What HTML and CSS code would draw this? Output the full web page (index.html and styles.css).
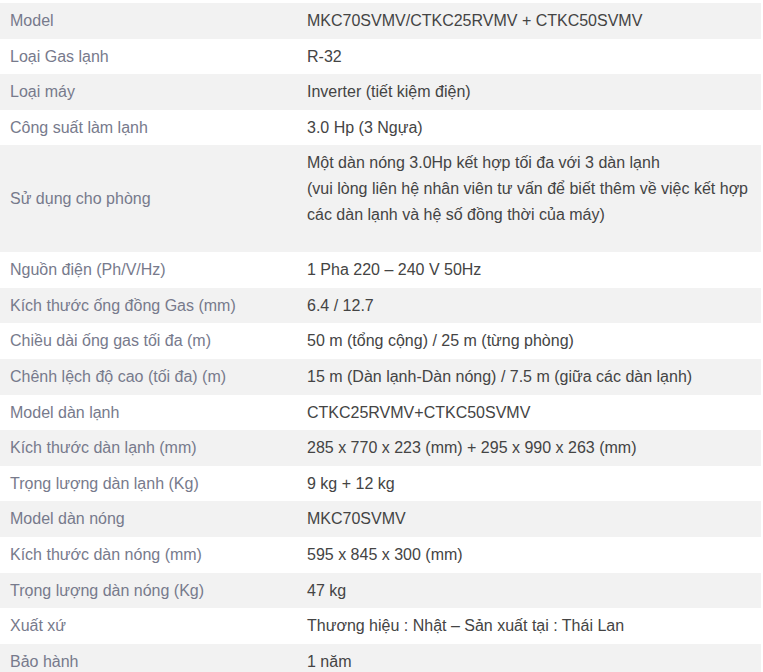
FILE: index.html
```html
<!DOCTYPE html>
<html lang="vi">
<head>
<meta charset="utf-8">
<link rel="stylesheet" href="styles.css">
</head>
<body>
<table class="spec">
<tbody>
<tr><td class="k">Model</td><td class="v">MKC70SVMV/CTKC25RVMV + CTKC50SVMV</td></tr>
<tr><td class="k">Loại Gas lạnh</td><td class="v">R-32</td></tr>
<tr><td class="k">Loại máy</td><td class="v">Inverter (tiết kiệm điện)</td></tr>
<tr><td class="k">Công suất làm lạnh</td><td class="v">3.0 Hp (3 Ngựa)</td></tr>
<tr><td class="k">Sử dụng cho phòng</td><td class="v"><p class="para">Một dàn nóng 3.0Hp kết hợp tối đa với 3 dàn lạnh<br>(vui lòng liên hệ nhân viên tư vấn để biết thêm về việc kết hợp các dàn lạnh và hệ số đồng thời của máy)</p></td></tr>
<tr><td class="k">Nguồn điện (Ph/V/Hz)</td><td class="v">1 Pha 220 – 240 V 50Hz</td></tr>
<tr><td class="k">Kích thước ống đồng Gas (mm)</td><td class="v">6.4 / 12.7</td></tr>
<tr><td class="k">Chiều dài ống gas tối đa (m)</td><td class="v">50 m (tổng cộng) / 25 m (từng phòng)</td></tr>
<tr><td class="k">Chênh lệch độ cao (tối đa) (m)</td><td class="v">15 m (Dàn lạnh-Dàn nóng) / 7.5 m (giữa các dàn lạnh)</td></tr>
<tr><td class="k">Model dàn lạnh</td><td class="v">CTKC25RVMV+CTKC50SVMV</td></tr>
<tr><td class="k">Kích thước dàn lạnh (mm)</td><td class="v">285 x 770 x 223 (mm) + 295 x 990 x 263 (mm)</td></tr>
<tr><td class="k">Trọng lượng dàn lạnh (Kg)</td><td class="v">9 kg + 12 kg</td></tr>
<tr><td class="k">Model dàn nóng</td><td class="v">MKC70SVMV</td></tr>
<tr><td class="k">Kích thước dàn nóng (mm)</td><td class="v">595 x 845 x 300 (mm)</td></tr>
<tr><td class="k">Trọng lượng dàn nóng (Kg)</td><td class="v">47 kg</td></tr>
<tr><td class="k">Xuất xứ</td><td class="v">Thương hiệu : Nhật – Sản xuất tại : Thái Lan</td></tr>
<tr><td class="k">Bảo hành</td><td class="v">1 năm</td></tr>
</tbody>
</table>
</body>
</html>
```
FILE: styles.css
```css
html, body {
  margin: 0;
  padding: 0;
  background: #ffffff;
}
body {
  padding-top: 3px;
  font-family: "Liberation Sans", Arial, sans-serif;
  font-size: 16px;
}
.spec {
  width: 761px;
  border-collapse: collapse;
  border-spacing: 0;
}
.spec tr:nth-child(odd) td {
  background: #f2f2f2;
}
.spec td {
  padding: 5px 10px;
  line-height: 25.6px;
  vertical-align: middle;
}
.spec .k {
  width: 277px;
  color: #777a8c;
}
.spec .v {
  color: #444444;
}
.para {
  margin: 0 0 20px 0;
}
```
